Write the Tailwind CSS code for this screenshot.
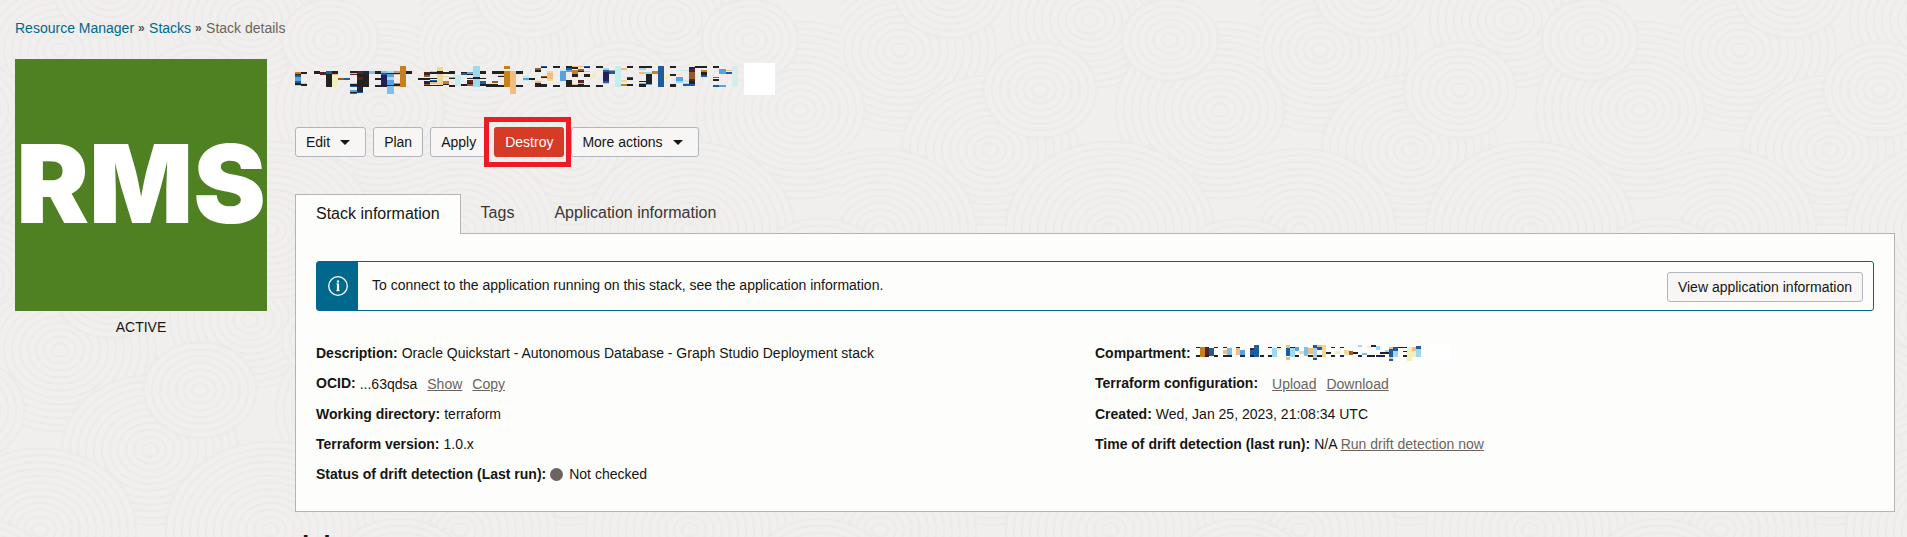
<!DOCTYPE html>
<html lang="en">
<head>
<meta charset="utf-8">
<title>Stack details</title>
<script src="https://cdn.jsdelivr.net/npm/@tailwindcss/browser@4"></script>
</head>
<body class="relative h-screen overflow-hidden bg-[#f1efed] font-['Liberation_Sans',Arial,sans-serif] text-sm leading-5 text-[#161513]">
<svg class="absolute inset-0 -z-10 h-full w-full" aria-hidden="true">
  <defs>
    <pattern id="rings" width="420" height="300" patternUnits="userSpaceOnUse">
      <g id="tile" fill="#f1efed" stroke="#edebe9" stroke-width="2"></g>
    </pattern>
  </defs>
  <rect width="100%" height="100%" fill="url(#rings)"/>
</svg>
<nav class="flex items-center px-[15px] pt-[18px]" aria-label="Breadcrumb">
  <a href="#" class="text-[#00688c]">Resource Manager</a>
  <span class="w-[15px] pl-1 text-xs font-bold text-[#555]">»</span>
  <a href="#" class="text-[#00688c]">Stacks</a>
  <span class="w-[15px] pl-1 text-xs font-bold text-[#555]">»</span>
  <span class="text-[#6b6560]">Stack details</span>
</nav>
<main class="flex gap-7 pt-[21px] pr-3 pl-[15px]">
  <aside class="w-[252px] shrink-0 text-center">
    <div class="flex h-[252px] items-center justify-center overflow-hidden bg-[#4f8122] pb-1 font-['Inter'] text-[109px] leading-none font-black text-white">RMS</div>
    <p class="pt-1.5">ACTIVE</p>
  </aside>
  <div class="min-w-0 flex-1">
    <h1 class="flex h-[68px] items-start pt-[3px]" aria-label="Stack name">
      <svg id="name" width="480" height="34" viewBox="45 36 1440 102" shape-rendering="crispEdges"></svg>
    </h1>
    <div class="flex gap-[7px]">
      <button class="flex h-[30px] items-center gap-2.5 rounded-[3px] border border-[#b1b5be] bg-[#f7f6f5] px-2.5">Edit <svg class="mr-[5px]" width="10" height="5"><path d="M0 0h10L5 5z" fill="#161513"/></svg></button>
      <button class="h-[30px] rounded-[3px] border border-[#b1b5be] bg-[#f7f6f5] px-2.5">Plan</button>
      <button class="h-[30px] rounded-[3px] border border-[#b1b5be] bg-[#f7f6f5] px-2.5">Apply</button>
      <button class="relative h-[30px] rounded-[3px] bg-[#d63b25] px-[11px] text-white">Destroy<span class="absolute -inset-y-[10px] -right-[7px] -left-[10px] border-[5px] border-[#ed1c24]"></span></button>
      <button class="flex h-[30px] items-center gap-2.5 rounded-[3px] border border-[#b1b5be] bg-[#f7f6f5] px-2.5">More actions <svg class="mr-[5px]" width="10" height="5"><path d="M0 0h10L5 5z" fill="#161513"/></svg></button>
    </div>

    <div class="mt-[37px] flex text-base" role="tablist">
      <button role="tab" aria-selected="true" class="relative z-10 -mb-px h-10 border border-b-0 border-[#b8b3ac] bg-[#fdfdfb] px-5 pb-0.5">Stack information</button>
      <button role="tab" class="h-[37px] px-5 text-[#3a3632]">Tags</button>
      <button role="tab" class="h-[37px] px-5 text-[#3a3632]">Application information</button>
    </div>

    <section class="border border-[#b8b3ac] bg-[#fdfdfb] px-5 pt-[27px] pb-[22px]">
      <div class="flex h-[50px] items-stretch rounded-[3px] border border-[#00688c]">
        <div class="flex w-[41px] items-center justify-center bg-[#00688c]">
          <svg width="20" height="20" viewBox="0 0 20 20" fill="none" stroke="#fff" aria-hidden="true"><circle cx="10" cy="10" r="9.300" stroke-width="1.300"/><path d="M8.500 8h1.500M8.300 14.700h3.400" stroke-width="1"/><path d="M10 7.600v7.500M10 4.500v2" stroke-width="2.200"/></svg>
        </div>
        <p class="flex-1 pt-[13px] pl-3.5">To connect to the application running on this stack, see the application information.</p>
        <button class="mt-2.5 mr-2.5 h-[30px] rounded-[3px] border border-[#b1b5be] bg-[#f7f6f5] px-2.5">View application information</button>
      </div>

      <div class="mt-[27px] grid grid-cols-2 leading-[30px]">
        <dl>
          <div class="flex gap-1"><dt class="font-bold">Description:</dt><dd>Oracle Quickstart - Autonomous Database - Graph Studio Deployment stack</dd></div>
          <div class="flex gap-1"><dt class="font-bold">OCID:</dt><dd class="flex gap-2.5 pt-px">...63qdsa <a href="#" class="text-[#6b6560] underline">Show</a> <a href="#" class="text-[#6b6560] underline">Copy</a></dd></div>
          <div class="flex gap-1"><dt class="font-bold">Working directory:</dt><dd>terraform</dd></div>
          <div class="flex gap-1"><dt class="font-bold">Terraform version:</dt><dd>1.0.x</dd></div>
          <div class="flex gap-1"><dt class="font-bold">Status of drift detection (Last run):</dt><dd class="flex items-center gap-1.5"><span class="size-[13px] rounded-full bg-[#6b6360]"></span>Not checked</dd></div>
        </dl>
        <dl>
          <div class="flex gap-1"><dt class="font-bold">Compartment:</dt><dd class="pt-[5px]" aria-label="Compartment name"><svg id="compartment" width="257" height="18" viewBox="15 15 771 54" shape-rendering="crispEdges"></svg></dd></div>
          <div class="flex gap-3.5"><dt class="font-bold">Terraform configuration:</dt><dd class="flex gap-2.5 pt-px"><a href="#" class="text-[#6b6560] underline">Upload</a><a href="#" class="text-[#6b6560] underline">Download</a></dd></div>
          <div class="flex gap-1"><dt class="font-bold">Created:</dt><dd>Wed, Jan 25, 2023, 21:08:34 UTC</dd></div>
          <div class="flex gap-1"><dt class="font-bold">Time of drift detection (last run):</dt><dd>N/A <a href="#" class="text-[#6b6560] underline">Run drift detection now</a></dd></div>
        </dl>
      </div>
    </section>
    <h2 class="mt-[17px] font-['Inter'] text-2xl leading-8 font-bold">Jobs</h2>
  </div>
</main>
<script>
const NS = 'http://www.w3.org/2000/svg';
function add(parent, tag, attrs) {
  const el = document.createElementNS(NS, tag);
  for (const k in attrs) el.setAttribute(k, attrs[k]);
  parent.appendChild(el);
}
// Overlapping ripples for the page texture
const tile = document.getElementById('tile');
[[60,50,96],[250,20,80],[380,110,104],[150,150,88],[40,230,96],[270,230,104],[400,280,72],[200,90,56],[330,40,48],[110,290,56],[110,-10,56],[-20,280,72],[-40,110,64]].forEach(([x, y, r]) => {
  for (let i = r; i > 0; i -= 8) add(tile, 'ellipse', { cx: x, cy: y, rx: i, ry: i * 0.85 });
});
// Pixelated names: colour key followed by x,y,w,h cells
const C = { k:'#232222', n:'#24205e', r:'#5b2222', b:'#1d5c9f', c:'#5aa2df', l:'#80bfec', a:'#9fd8ef', t:'#c3eeec', y:'#f0f0bc', s:'#efd797', o:'#c58120', p:'#f0bc80', w:'#fff', m:'#9a5a25', g:'#a0a0a0', e:'#d6edeb' };
function mosaic(id, data) {
  const svg = document.getElementById(id);
  data.trim().split(/\s+/).forEach(d => {
    const [x, y, width, height] = d.slice(1).split(',');
    add(svg, 'rect', { x, y, width, height, fill: C[d[0]] });
  });
}
mosaic('name', `
o45,66,18,6 k63,66,18,6 k45,72,18,3 b45,75,18,6 c45,81,18,12 b45,93,18,6 k45,99,18,6 k63,102,18,6 p45,105,18,3 p63,99,18,3
k102,63,18,9 r120,66,18,9 b138,63,18,9 k156,63,18,9 k138,72,18,39 p156,72,18,6 y156,75,18,36 m174,84,18,6 b192,84,18,6
k210,63,21,6 p210,69,21,3 r210,72,21,3 r231,63,18,9 n249,63,18,9 l267,63,18,9 k231,72,36,39 r231,81,18,9 p210,99,21,3 k210,102,21,6 b210,108,21,3
c210,120,21,6 k210,126,21,3 m210,129,21,3 n231,111,18,9 k231,120,18,6 b231,126,18,3
k285,63,18,9 k285,84,18,6 k285,105,18,6 l303,63,18,6 b303,69,18,6 n303,75,18,30 k303,105,18,6
a321,63,21,6 k321,69,21,3 c321,72,21,9 a321,81,21,9 c321,90,21,15 k321,105,21,3 l321,108,21,24
g342,63,18,6 k342,69,18,3 p342,72,18,3 o342,99,18,3 k342,102,18,6 p342,108,18,3 o360,48,18,63 k378,63,18,9 k414,84,18,6
r432,66,18,6 k432,72,18,3 m432,75,18,6 k432,84,18,6 n432,93,18,9 m432,102,18,3 k432,105,18,3
p450,63,21,3 k450,66,21,6 k450,84,21,3 b450,90,21,3 k450,93,21,3 p450,96,21,6 k450,105,21,3 s471,51,18,54 k471,63,18,9 k471,105,18,3
k489,66,18,6 s489,78,18,3 o489,93,18,9 k489,102,18,3 k507,63,18,9 g507,81,18,3 k507,84,18,3 k507,105,18,6 t525,75,18,33
k543,66,18,3 b543,69,18,6 k543,102,18,6 c561,66,18,6 k561,72,18,3 k561,84,18,3 r561,90,18,9 k561,99,18,3 m561,102,18,6
a579,48,21,63 k579,81,21,6 k600,63,18,9 k600,84,18,3 b600,93,18,9 k600,102,18,6 k618,102,36,9 k636,63,36,9 m636,93,18,6
p654,75,18,3 k654,78,18,3 k654,105,18,6 o672,48,18,9 o672,63,18,48 p690,63,18,69 k708,63,21,9 k708,105,21,6
t729,78,18,15 c729,84,18,6 k747,84,18,6
m765,54,18,6 k765,60,18,6 p765,93,18,6 k765,99,18,12 b783,48,18,3 k783,51,18,3 m783,78,18,3 k783,81,18,3 k783,102,18,9
s801,63,18,30 p801,69,18,18 k819,48,21,6 k819,105,21,6 c840,63,18,30 t840,57,18,6
k858,48,18,6 b858,54,18,6 c858,60,18,6 k858,90,18,12 k858,102,18,9 p876,48,18,3 k876,51,18,6 o876,60,18,12 k876,72,18,9 p876,102,18,3 k876,105,18,6
p894,48,18,3 m894,57,18,6 k894,63,18,3 r894,90,18,9 p894,99,18,3 k894,102,18,9 b912,48,18,3 k912,51,18,3 p912,63,18,3 k912,72,18,9 k912,105,18,6 y930,72,18,12
k948,48,21,6 k948,105,21,6 a969,54,18,6 b969,60,18,6 n969,66,18,27 b969,93,18,6 a969,99,18,3 g987,60,18,3 b987,63,18,9 t1005,48,18,63
p1023,54,18,6 s1023,90,18,6 o1023,102,18,6 k1041,48,18,6 b1041,81,18,3 k1041,84,18,6 k1041,102,18,6
k1077,48,39,6 a1077,54,21,6 p1077,66,21,6 k1077,93,21,3 g1077,99,21,3 k1077,102,21,9 a1098,66,18,6 k1098,72,18,30 c1098,102,18,3
o1116,63,18,9 b1134,48,18,63 y1152,72,18,15 k1170,48,18,6 k1170,72,18,6 k1170,102,18,9 t1188,60,21,3 c1188,81,21,12 a1188,93,21,6
t1209,60,18,3 t1209,90,18,6 p1209,99,18,3 b1209,102,18,6 n1227,51,18,6 r1227,57,18,9 m1227,66,18,27 r1227,87,18,6 k1227,93,18,9 b1227,102,18,6
k1245,48,36,6 o1263,60,18,6 k1263,66,18,9 b1263,75,18,6 k1299,48,18,6 m1299,81,18,3 k1299,87,18,6 b1299,105,18,6
c1317,57,21,15 c1317,105,21,6 p1338,60,18,3 b1338,66,18,6 e1356,48,18,63 w1392,39,93,96`);
mosaic('compartment', `
k18,27,12,3 k18,51,12,6 o30,27,15,30 r45,27,12,24 b57,30,15,24 k45,51,12,6 k72,27,12,3 k72,51,12,6
k99,27,12,3 p99,36,12,12 k99,51,12,6 l111,30,15,21 k111,51,15,6 p138,30,12,21 k138,27,12,3 c150,36,15,15 n150,51,15,6
r180,30,12,6 b180,36,12,15 n180,51,12,6 b192,21,15,36 k210,51,12,6
k234,27,12,3 k234,51,12,6 a246,30,15,27 k261,27,12,3 y261,30,12,6
p288,21,12,15 b288,30,12,24 p288,57,12,9 k300,27,15,3 a300,30,15,27 c315,27,12,12 k315,51,12,6 s327,39,15,9 l342,27,13,27 p355,30,14,18 k355,51,14,6
b369,21,13,9 a369,30,13,27 p369,51,13,9 b369,60,13,6 p382,21,13,9 b382,27,13,9 k382,51,13,6 s395,21,13,36 k408,42,15,6 k423,27,12,3 k423,51,12,6
y435,39,14,9 k449,27,14,3 n449,51,14,6 s463,36,13,12 y463,48,13,6 m476,39,14,12 k490,42,13,6 a503,21,13,6 n503,51,13,6 l516,45,14,6
k530,51,26,6 y530,24,13,6 n543,21,14,6 a557,24,13,12 n557,51,27,6 k570,42,27,6 a584,36,13,6
p597,27,13,9 b597,33,13,27 p597,57,13,6 b597,63,13,6 b610,27,14,12 a610,39,14,18 k624,27,27,3 k638,39,13,3 k638,51,13,6 y651,27,14,42 p665,27,14,12 y665,39,14,18 b679,24,14,9 a679,33,14,24 w720,18,63,51`);
</script>
</body>
</html>
